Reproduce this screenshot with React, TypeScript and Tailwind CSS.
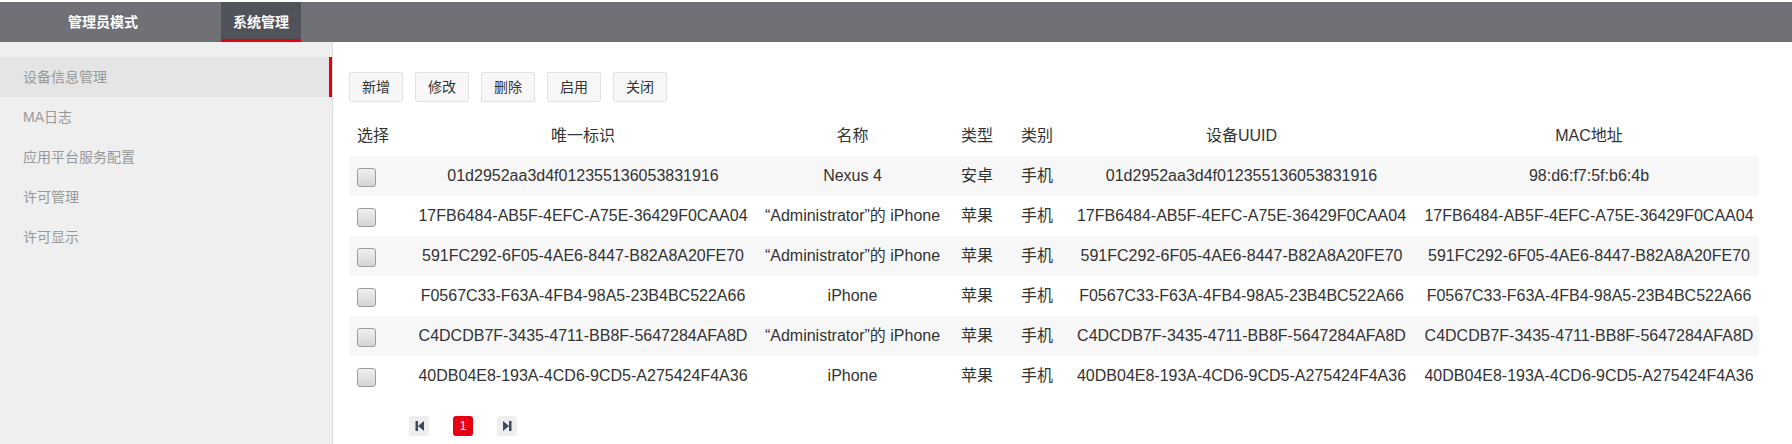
import React from "react";

const rows = [
  ["01d2952aa3d4f012355136053831916", "Nexus 4", "安卓", "手机", "01d2952aa3d4f012355136053831916", "98:d6:f7:5f:b6:4b"],
  ["17FB6484-AB5F-4EFC-A75E-36429F0CAA04", "“Administrator”的 iPhone", "苹果", "手机", "17FB6484-AB5F-4EFC-A75E-36429F0CAA04", "17FB6484-AB5F-4EFC-A75E-36429F0CAA04"],
  ["591FC292-6F05-4AE6-8447-B82A8A20FE70", "“Administrator”的 iPhone", "苹果", "手机", "591FC292-6F05-4AE6-8447-B82A8A20FE70", "591FC292-6F05-4AE6-8447-B82A8A20FE70"],
  ["F0567C33-F63A-4FB4-98A5-23B4BC522A66", "iPhone", "苹果", "手机", "F0567C33-F63A-4FB4-98A5-23B4BC522A66", "F0567C33-F63A-4FB4-98A5-23B4BC522A66"],
  ["C4DCDB7F-3435-4711-BB8F-5647284AFA8D", "“Administrator”的 iPhone", "苹果", "手机", "C4DCDB7F-3435-4711-BB8F-5647284AFA8D", "C4DCDB7F-3435-4711-BB8F-5647284AFA8D"],
  ["40DB04E8-193A-4CD6-9CD5-A275424F4A36", "iPhone", "苹果", "手机", "40DB04E8-193A-4CD6-9CD5-A275424F4A36", "40DB04E8-193A-4CD6-9CD5-A275424F4A36"],
];

const sideItems = ["设备信息管理", "MA日志", "应用平台服务配置", "许可管理", "许可显示"];
const buttons = ["新增", "修改", "删除", "启用", "关闭"];

function Checkbox() {
  return (
    <span className="block w-[19px] h-[19px] rounded-[3px] border border-[#9e9e9e] bg-gradient-to-b from-[#efefef] to-[#d6d6d6]" />
  );
}

export default function App() {
  return (
    <div
      className="w-full h-[444px] bg-white pt-[2px] flex flex-col overflow-hidden"
      style={{ fontFamily: '"Liberation Sans", "Noto Sans CJK SC", sans-serif' }}
    >
      {/* Header */}
      <div className="h-[40px] bg-[#707176] flex shrink-0">
        <div className="w-[206px] flex items-center justify-center text-white text-[14px] font-bold">
          管理员模式
        </div>
        <div className="ml-[15px] w-[80px] bg-[#50535a] border-b-[3px] border-[#e60012] flex items-center justify-center text-white text-[14px] font-bold pt-[3px]">
          系统管理
        </div>
      </div>

      <div className="flex flex-1 min-h-0">
        {/* Sidebar */}
        <div className="w-[333px] shrink-0 bg-[#efefef] border-r border-[#dcdcdc] pt-[15px]">
          {sideItems.map((item, i) => (
            <div
              key={item}
              className={
                i === 0
                  ? "h-[40px] flex items-center pl-[23px] text-[14px] text-[#999] bg-[#e5e5e5] border-r-[3px] border-[#e60012]"
                  : "h-[40px] flex items-center pl-[23px] text-[14px] text-[#999]"
              }
            >
              {item}
            </div>
          ))}
        </div>

        {/* Main */}
        <div className="flex-1 pl-[16px] pt-[30px]">
          <div className="flex gap-[12px]">
            {buttons.map((b) => (
              <button
                key={b}
                className="w-[54px] h-[30px] bg-[#f7f7f7] border border-[#e2e2e2] rounded-[2px] text-[14px] text-[#333] flex items-center justify-center"
              >
                {b}
              </button>
            ))}
          </div>

          <table className="mt-[14px] w-[1410px] table-fixed border-collapse text-[16px] text-[#333]">
            <colgroup>
              <col className="w-[61px]" />
              <col className="w-[346px]" />
              <col className="w-[193px]" />
              <col className="w-[56px]" />
              <col className="w-[64px]" />
              <col className="w-[345px]" />
              <col className="w-[345px]" />
            </colgroup>
            <thead>
              <tr className="h-[40px]">
                <th className="font-normal text-left pl-[8px]">选择</th>
                <th className="font-normal text-center">唯一标识</th>
                <th className="font-normal text-center">名称</th>
                <th className="font-normal text-center">类型</th>
                <th className="font-normal text-center">类别</th>
                <th className="font-normal text-center">设备UUID</th>
                <th className="font-normal text-center pl-[5px]">MAC地址</th>
              </tr>
            </thead>
            <tbody>
              {rows.map((r, i) => (
                <tr key={i} className={i % 2 === 0 ? "h-[40px] bg-[#f7f7f7]" : "h-[40px] bg-white"}>
                  <td className="pl-[8px] align-middle">
                    <div className="pt-[2px]">
                      <Checkbox />
                    </div>
                  </td>
                  <td className="text-center whitespace-nowrap">{r[0]}</td>
                  <td className="text-center whitespace-nowrap">{r[1]}</td>
                  <td className="text-center whitespace-nowrap">{r[2]}</td>
                  <td className="text-center whitespace-nowrap">{r[3]}</td>
                  <td className="text-center whitespace-nowrap">{r[4]}</td>
                  <td className="text-center whitespace-nowrap pl-[5px]">{r[5]}</td>
                </tr>
              ))}
            </tbody>
          </table>

          {/* Pagination */}
          <div className="flex gap-[24px] mt-[20px] ml-[60px]">
            <div className="w-[20px] h-[20px] rounded-[3px] bg-[#eeeeee] flex items-center justify-center">
              <svg width="11" height="12" viewBox="0 0 11 12">
                <rect x="1.5" y="1" width="2.5" height="10" fill="#3d4a5a" />
                <polygon points="10,1 10,11 4,6" fill="#3d4a5a" />
              </svg>
            </div>
            <div className="w-[20px] h-[20px] rounded-[3px] bg-[#e60012] flex items-center justify-center text-white text-[12px]">
              1
            </div>
            <div className="w-[20px] h-[20px] rounded-[3px] bg-[#eeeeee] flex items-center justify-center">
              <svg width="11" height="12" viewBox="0 0 11 12">
                <polygon points="1,1 1,11 7,6" fill="#3d4a5a" />
                <rect x="7" y="1" width="2.5" height="10" fill="#3d4a5a" />
              </svg>
            </div>
          </div>
        </div>
      </div>
    </div>
  );
}
